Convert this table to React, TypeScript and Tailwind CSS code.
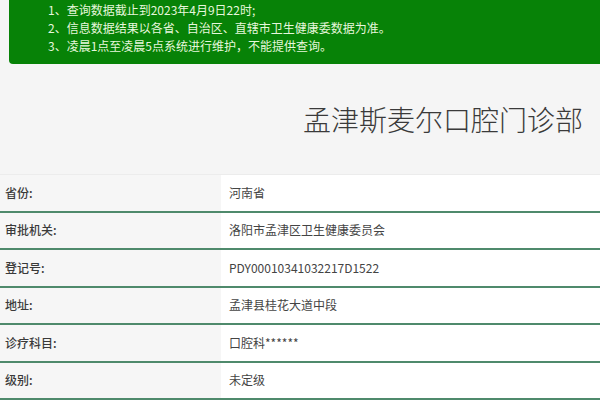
import React from "react";

const rows: [string, string][] = [
  ["省份:", "河南省"],
  ["审批机关:", "洛阳市孟津区卫生健康委员会"],
  ["登记号:", "PDY00010341032217D1522"],
  ["地址:", "孟津县桂花大道中段"],
  ["诊疗科目:", "口腔科******"],
  ["级别:", "未定级"],
];

export default function App() {
  return (
    <div
      className="w-[600px] h-[400px] overflow-hidden bg-[#f5f5f5] text-[#333]"
      style={{ fontFamily: '"Noto Sans CJK SC", "Noto Sans", sans-serif' }}
    >
      <div className="ml-[9px] bg-[#078207] rounded-bl-[4px] pt-[1px] pb-[9px] pl-[39px] text-[12px] leading-[18px] text-[#e6f7dc]">
        <div>1、查询数据截止到2023年4月9日22时;</div>
        <div>2、信息数据结果以各省、自治区、直辖市卫生健康委数据为准。</div>
        <div>3、凌晨1点至凌晨5点系统进行维护，不能提供查询。</div>
      </div>
      <div className="h-[110px] flex items-center justify-end pr-[17px]">
        <div className="text-[28px] leading-[40px] text-[#3a3a3a] font-light">孟津斯麦尔口腔门诊部</div>
      </div>
      <div className="border-t border-[#ececec]">
        {rows.map(([k, v]) => (
          <div key={k} className="flex h-[37.5px] border-b-2 border-[#4f8a6c] text-[12px]">
            <div className="w-[221px] bg-[#f6f6f6] flex items-center pl-[5px] text-[#3a3a3a] font-medium">{k}</div>
            <div className="flex-1 bg-white flex items-center pl-[8px] text-[#444]">{v}</div>
          </div>
        ))}
      </div>
    </div>
  );
}
